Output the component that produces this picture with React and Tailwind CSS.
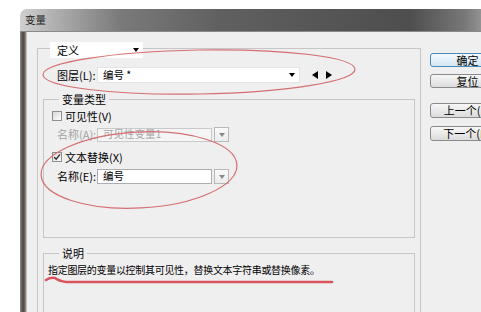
import React from 'react';

const Tri = ({ dir = 'down', className = '' }) => {
  if (dir === 'down') {
    return (
      <svg width="6" height="4" viewBox="0 0 6 4" className={className}>
        <path d="M0 0 L6 0 L3 4 Z" fill="currentColor" />
      </svg>
    );
  }
  if (dir === 'left') {
    return (
      <svg width="6" height="8" viewBox="0 0 6 8" className={className}>
        <path d="M6 0 L6 8 L0 4 Z" fill="currentColor" />
      </svg>
    );
  }
  return (
    <svg width="6" height="8" viewBox="0 0 6 8" className={className}>
      <path d="M0 0 L0 8 L6 4 Z" fill="currentColor" />
    </svg>
  );
};

const CheckBox = ({ checked }) => (
  <span className="w-[10px] h-[10px] shrink-0 border border-[#8e8f8f] bg-[linear-gradient(135deg,#d8d8d8,#ffffff)] flex items-center justify-center">
    {checked && (
      <svg width="8" height="8" viewBox="0 0 8 8">
        <path d="M1.2 4.2 L3.2 6.3 L7 1.4" fill="none" stroke="#2d2d2d" strokeWidth="1.4" />
      </svg>
    )}
  </span>
);

const ComboBtn = () => (
  <span className="ml-[2px] w-[15px] h-[15px] shrink-0 border border-[#b9b9b9] bg-[linear-gradient(#fafafa,#ececec)] flex items-center justify-center text-[#8a8a8a]">
    <Tri dir="down" />
  </span>
);

const Button = ({ children, primary, className = '' }) => (
  <div
    className={`w-[75px] flex items-center justify-center rounded-[3px] border text-[11px] leading-none ${
      primary
        ? 'border-[#4d89b6] bg-[linear-gradient(#f3f9fd,#d3e6f2)]'
        : 'border-[#8a8a8a] bg-[linear-gradient(#f7f7f7,#dcdcdc)]'
    } ${className}`}
  >
    {children}
  </div>
);

export default function App() {
  return (
    <div className="relative w-[481px] h-[312px] overflow-hidden bg-white pt-[9px] pl-[20px] font-['Noto_Sans_CJK_SC',sans-serif] text-[11px] text-black">
      {/* window */}
      <div className="w-[500px] rounded-tl-[7px] overflow-hidden flex flex-col">
        {/* title bar */}
        <div className="h-[23px] flex items-center pl-[5px] border-b border-[#8a8a8a] bg-[linear-gradient(90deg,#cfcfcf_0%,#ababab_8%,#7a7a7a_20%,#606060_40%,#565656_60%,#4e4e4e_78%,#787878_89%,#aaaaaa_95%)]">
          <span className="text-[10.5px] text-[#1e1e1e] leading-none">变量</span>
          <span className="ml-auto mr-[9px] w-[18px] h-[17px] rounded-[3px] bg-[linear-gradient(#e08a7a,#b8412f)] border border-[#7a3a30]" />
        </div>

        {/* body */}
        <div className="flex h-[280px]">
          <div className="w-[7px] shrink-0 bg-[linear-gradient(90deg,#8e8e8e,#4b4643_40%,#6a6460_70%,#dcdcdc)]" />
          <div className="flex-1 bg-[#f0eff0] flex items-start pl-[10px]">
            {/* outer group */}
            <div className="mt-[16px] w-[384px] h-[300px] shrink-0 border border-[#c6c6c6] flex flex-col">
              <div className="ml-[12px] -mt-[7px] w-[93px] h-[16px] bg-white flex items-center pl-[7px] pr-[4px]">
                <span className="leading-none">定义</span>
                <Tri dir="down" className="ml-auto" />
              </div>

              <div className="mt-[9px] h-[16px] flex items-center pl-[19px]">
                <span className="w-[40px] leading-none">图层(L):</span>
                <div className="w-[203px] h-[16px] bg-white border border-[#e4e4e4] flex items-center pl-[5px] pr-[4px]">
                  <span className="text-[10.5px] leading-none">编号 *</span>
                  <Tri dir="down" className="ml-auto" />
                </div>
                <Tri dir="left" className="ml-[12px]" />
                <Tri dir="right" className="ml-[8px]" />
              </div>

              {/* variable type */}
              <div className="ml-[5px] mt-[16px] w-[372px] h-[139px] shrink-0 border border-[#c6c6c6] flex flex-col">
                <span className="self-start ml-[15px] -mt-[7px] px-[3px] h-[12px] leading-[12px] bg-[#f0eff0]">变量类型</span>

                <div className="mt-[6px] h-[10px] flex items-center pl-[8px]">
                  <CheckBox />
                  <span className="ml-[3px] leading-none">可见性(V)</span>
                </div>

                <div className="mt-[6px] h-[15px] flex items-center pl-[13px]">
                  <span className="w-[40px] leading-none text-[#a3a3a3]">名称(A):</span>
                  <div className="w-[115px] h-[14px] border border-[#c9c9c9] bg-[#f5f5f5] flex items-center pl-[5px]">
                    <span className="text-[10.5px] leading-none text-[#a6a6a6]">可见性变量1</span>
                  </div>
                  <ComboBtn />
                </div>

                <div className="mt-[10px] h-[10px] flex items-center pl-[8px]">
                  <CheckBox checked />
                  <span className="ml-[3px] leading-none">文本替换(X)</span>
                </div>

                <div className="mt-[7px] h-[15px] flex items-center pl-[13px]">
                  <span className="w-[40px] leading-none">名称(E):</span>
                  <div className="w-[115px] h-[15px] border border-[#abadb3] bg-white flex items-center pl-[5px]">
                    <span className="text-[10.5px] leading-none">编号</span>
                  </div>
                  <ComboBtn />
                </div>
              </div>

              {/* description */}
              <div className="ml-[5px] mt-[15px] w-[372px] h-[80px] shrink-0 border border-[#c6c6c6] flex flex-col">
                <span className="self-start ml-[15px] -mt-[7px] px-[3px] h-[12px] leading-[12px] bg-[#f0eff0]">说明</span>
                <p className="mt-[5px] pl-[4px] h-[12px] leading-[12px] text-[10px] tracking-[-0.3px] whitespace-nowrap">
                  指定图层的变量以控制其可见性，替换文本字符串或替换像素。
                </p>
              </div>
            </div>

            {/* buttons */}
            <div className="ml-[9px] mt-[21px] w-[75px] shrink-0 flex flex-col">
              <Button primary className="h-[14px]">确定</Button>
              <Button className="mt-[7px] h-[14px]">复位</Button>
              <Button className="mt-[15px] h-[15px]">上一个(P)</Button>
              <Button className="mt-[8px] h-[15px]">下一个(N)</Button>
            </div>
          </div>
        </div>
      </div>

      {/* red annotations */}
      <svg className="absolute inset-0 pointer-events-none" width="481" height="312" viewBox="0 0 481 312">
        <ellipse cx="199" cy="72" rx="156" ry="22" transform="rotate(-1 199 72)" fill="none" stroke="#d46f6f" strokeWidth="1.2" />
        <ellipse cx="139" cy="170" rx="98" ry="38" transform="rotate(-3 139 170)" fill="none" stroke="#d46f6f" strokeWidth="1.2" />
        <path d="M46 280 Q50 277 55 278 Q59 281 66 282 L332 282" fill="none" stroke="#d9535e" strokeWidth="2.6" strokeLinecap="round" />
      </svg>
    </div>
  );
}
